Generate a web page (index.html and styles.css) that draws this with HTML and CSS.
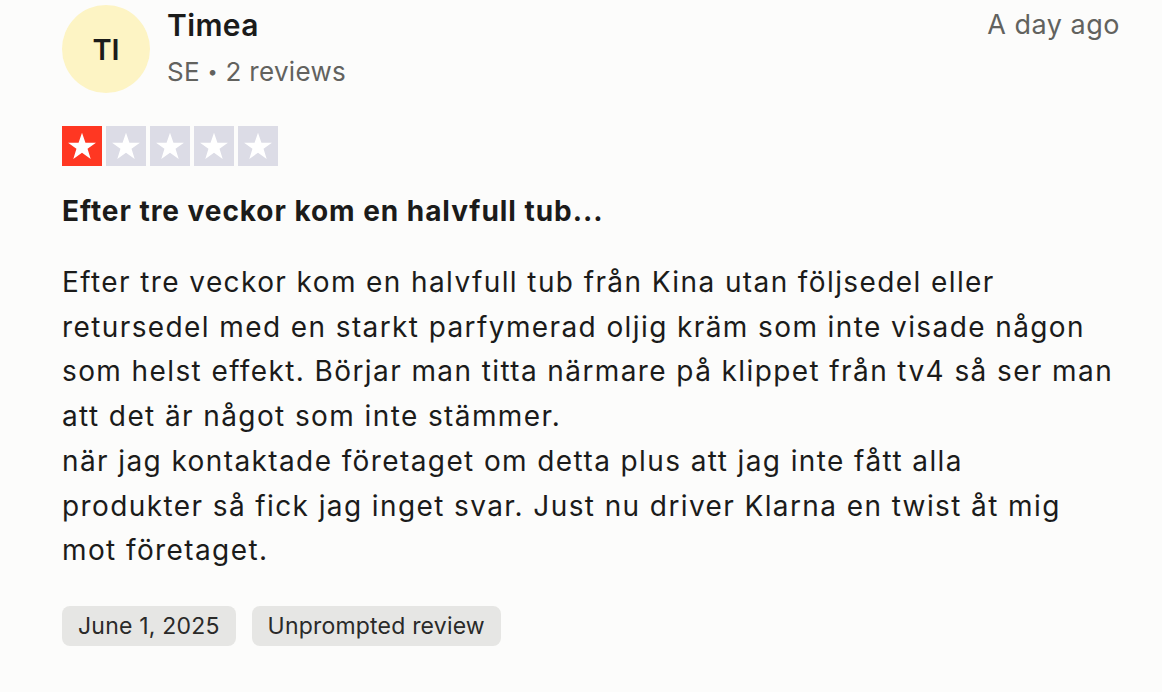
FILE: index.html
```html
<!DOCTYPE html>
<html lang="sv">
<head>
<meta charset="utf-8">
<title>Review</title>
<link rel="stylesheet" href="styles.css">
</head>
<body>
<article class="review">
  <header class="review-header">
    <div class="user">
      <div class="avatar">TI</div>
      <div class="user-info">
        <div class="name">Timea</div>
        <div class="meta">SE <span class="dot">•</span> 2 reviews</div>
      </div>
    </div>
    <time class="ago">A day ago</time>
  </header>
  <div class="stars">
    <span class="star on"><svg viewBox="0 0 24 24"><path d="M12 3.2l2.3 6.6h7l-5.6 4.1 2.1 6.7L12 16.5l-5.8 4.1 2.1-6.7L2.7 9.8h7z"/></svg></span>
    <span class="star"><svg viewBox="0 0 24 24"><path d="M12 3.2l2.3 6.6h7l-5.6 4.1 2.1 6.7L12 16.5l-5.8 4.1 2.1-6.7L2.7 9.8h7z"/></svg></span>
    <span class="star"><svg viewBox="0 0 24 24"><path d="M12 3.2l2.3 6.6h7l-5.6 4.1 2.1 6.7L12 16.5l-5.8 4.1 2.1-6.7L2.7 9.8h7z"/></svg></span>
    <span class="star"><svg viewBox="0 0 24 24"><path d="M12 3.2l2.3 6.6h7l-5.6 4.1 2.1 6.7L12 16.5l-5.8 4.1 2.1-6.7L2.7 9.8h7z"/></svg></span>
    <span class="star"><svg viewBox="0 0 24 24"><path d="M12 3.2l2.3 6.6h7l-5.6 4.1 2.1 6.7L12 16.5l-5.8 4.1 2.1-6.7L2.7 9.8h7z"/></svg></span>
  </div>
  <h2 class="title">Efter tre veckor kom en halvfull tub...</h2>
  <p class="body">Efter tre veckor kom en halvfull tub från Kina utan följsedel eller retursedel med en starkt parfymerad oljig kräm som inte visade någon som helst effekt. Börjar man titta närmare på klippet från tv4 så ser man att det är något som inte stämmer.<br>när jag kontaktade företaget om detta plus att jag inte fått alla<br>produkter så fick jag inget svar. Just nu driver Klarna en twist åt mig<br>mot företaget.</p>
  <div class="tags">
    <span class="tag">June 1, 2025</span>
    <span class="tag">Unprompted review</span>
  </div>
</article>
</body>
</html>
```

FILE: styles.css
```css
html, body {
  margin: 0;
  background: #fcfcfb;
}
body {
  font-family: Inter, "Noto Sans", sans-serif;
  color: #1b1b1a;
}
.review {
  padding: 5px 42px 0 62px;
}
.review-header {
  display: flex;
  justify-content: space-between;
  align-items: flex-start;
}
.user {
  display: flex;
  gap: 17px;
}
.avatar {
  width: 88px;
  height: 88px;
  border-radius: 50%;
  background: #fdf4c4;
  display: flex;
  align-items: center;
  justify-content: center;
  font-size: 29px;
  font-weight: 600;
  color: #1b1b1a;
}
.name {
  font-size: 30px;
  font-weight: 600;
  letter-spacing: 0.4px;
  line-height: 40px;
}
.meta {
  font-size: 26px;
  letter-spacing: 0.3px;
  color: #62625e;
  line-height: 36px;
  margin-top: 9px;
}
.dot {
  font-size: 18px;
  vertical-align: 3px;
}
.ago {
  font-size: 27px;
  letter-spacing: 0.5px;
  color: #62625e;
  line-height: 40px;
}
.stars {
  display: flex;
  gap: 4px;
  margin-top: 33px;
}
.star {
  width: 40px;
  height: 40px;
  background: #dcdce6;
  display: flex;
  align-items: center;
  justify-content: center;
}
.star.on {
  background: #ff3722;
}
.star svg {
  width: 36px;
  height: 36px;
  fill: #fff;
}
.title {
  font-size: 28px;
  font-weight: 700;
  letter-spacing: 0.95px;
  margin: 24px 0 0;
  line-height: 42px;
}
.body {
  font-size: 28px;
  letter-spacing: 1.4px;
  line-height: 44.7px;
  margin: 28px 0 0;
}
.tags {
  display: flex;
  gap: 16px;
  margin-top: 33px;
}
.tag {
  background: #e6e6e4;
  border-radius: 8px;
  height: 40px;
  padding: 0 16px;
  display: flex;
  align-items: center;
  font-size: 23px;
  letter-spacing: 0.2px;
  color: #2a2a29;
}
```
